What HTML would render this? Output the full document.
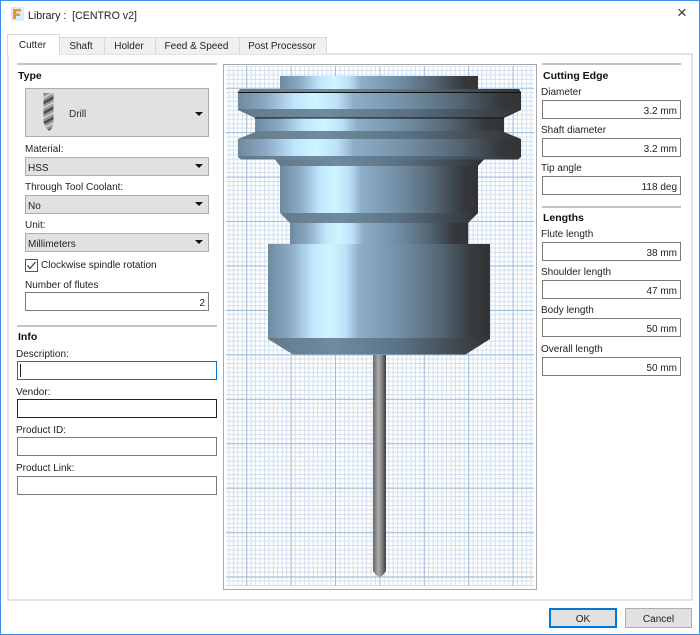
<!DOCTYPE html>
<html><head><meta charset="utf-8"><style>
html,body{margin:0;padding:0;background:#fff}
#w{position:relative;width:700px;height:635px;overflow:hidden;background:#fff;font:10px/14px "Liberation Sans",sans-serif;color:#222;box-sizing:border-box}
#w>*{position:absolute;box-sizing:border-box}
.t{white-space:nowrap;margin-top:1px}
.t.b{font-weight:bold;color:#111;font-size:10.5px;margin-top:0}
.c{background:#e1e1e1;border:1px solid #adadad;padding:4px 0 0 2px;height:19px}
.c:after{content:"";position:absolute;right:5px;top:6px;border:4px solid transparent;border-top:4px solid #111;border-bottom:0}
.d:after{top:23px}
.i{background:#fff;border:1px solid #7a7a7a;height:19px;text-align:right;padding:4px 3px 0 0}
.s{height:2px;background:#c4c4c4}
.tab{background:#f0f0f0;border:1px solid #d9d9d9;border-bottom:0;text-align:center;padding:2px 2px 0 0;top:37px;height:17px}
.btn{background:#e1e1e1;text-align:center;padding-top:3px;top:608px;height:20px}
</style></head><body><div id="w">
<div style="left:0;top:0;width:700px;height:635px;border:1px solid #3a8ee6"></div>
<svg style="left:11px;top:7px" width="13" height="14" viewBox="0 0 13 14"><rect width="13" height="14" fill="#dcedf8"/><path d="M2 2H10V4.5H5V6.5H9V9H5V12H2Z" fill="#e8913a"/></svg>
<div class="t" style="left:28px;top:8px;font-size:10.6px">Library :&nbsp; [CENTRO v2]</div>
<div class="t" style="left:677px;top:6px;font-size:17px;color:#333;margin:0">×</div>

<div style="left:7px;top:53px;width:686px;height:548px;border:2px solid #e2e2e2;background:#fff"></div>
<div class="tab" style="left:59px;width:46px">Shaft</div>
<div class="tab" style="left:104px;width:52px">Holder</div>
<div class="tab" style="left:155px;width:85px">Feed &amp; Speed</div>
<div class="tab" style="left:239px;width:88px">Post Processor</div>
<div class="tab" style="left:7px;top:34px;width:53px;height:21px;background:#fff;padding-top:4px">Cutter</div>

<div class="s" style="left:17px;top:63px;width:200px"></div>
<div class="t b" style="left:18px;top:69px">Type</div>
<div class="c d" style="left:25px;top:88px;width:184px;height:49px"></div>
<svg style="left:42px;top:92px" width="14" height="40" viewBox="0 0 14 40">
<defs><pattern id="tw" width="14" height="9" patternUnits="userSpaceOnUse" patternTransform="rotate(-28)"><rect width="14" height="9" fill="#999"/><rect y="0" width="14" height="2.6" fill="#4a4a4a"/><rect y="5" width="14" height="1.5" fill="#d6d6d6"/></pattern></defs>
<path d="M1.5 1H11.5V30L10 36L7 39L4 36L1.5 30Z" fill="url(#tw)"/></svg>
<div class="t" style="left:69px;top:107px;color:#3a2a2a">Drill</div>
<div class="t" style="left:25px;top:142px">Material:</div>
<div class="c" style="left:25px;top:157px;width:184px">HSS</div>
<div class="t" style="left:25px;top:180px">Through Tool Coolant:</div>
<div class="c" style="left:25px;top:195px;width:184px">No</div>
<div class="t" style="left:25px;top:218px">Unit:</div>
<div class="c" style="left:25px;top:233px;width:184px">Millimeters</div>
<svg style="left:25px;top:259px" width="13" height="13" viewBox="0 0 13 13"><rect x=".5" y=".5" width="12" height="12" fill="#fff" stroke="#555"/><path d="M2.5 6.5L5 9.5L10.5 3" fill="none" stroke="#333" stroke-width="1.2"/></svg>
<div class="t" style="left:41px;top:258px">Clockwise spindle rotation</div>
<div class="t" style="left:25px;top:278px">Number of flutes</div>
<div class="i" style="left:25px;top:292px;width:184px">2</div>

<div class="s" style="left:17px;top:325px;width:200px"></div>
<div class="t b" style="left:18px;top:330px">Info</div>
<div class="t" style="left:16px;top:347px">Description:</div>
<div class="i" style="left:17px;top:361px;width:200px;border-color:#0078d7"></div>
<div style="left:20px;top:364px;width:1px;height:13px;background:#222"></div>
<div class="t" style="left:16px;top:385px">Vendor:</div>
<div class="i" style="left:17px;top:399px;width:200px;border-color:#222"></div>
<div class="t" style="left:16px;top:423px">Product ID:</div>
<div class="i" style="left:17px;top:437px;width:200px"></div>
<div class="t" style="left:16px;top:461px">Product Link:</div>
<div class="i" style="left:17px;top:476px;width:200px"></div>

<svg style="left:0;top:0" width="700" height="635" viewBox="0 0 700 635">
<defs>
<linearGradient id="g"><stop offset="0" stop-color="#6e8a9f"/><stop offset=".1" stop-color="#8caac4"/><stop offset=".2" stop-color="#bfe6fc"/><stop offset=".275" stop-color="#cdf6ff"/><stop offset=".35" stop-color="#bde0f8"/><stop offset=".41" stop-color="#8eaec8"/><stop offset=".59" stop-color="#7390a6"/><stop offset=".77" stop-color="#566876"/><stop offset=".92" stop-color="#363a3e"/><stop offset="1" stop-color="#333"/></linearGradient>
<linearGradient id="d"><stop offset="0" stop-color="#63798a"/><stop offset=".3" stop-color="#6f8b9f"/><stop offset=".6" stop-color="#5a7184"/><stop offset=".85" stop-color="#40494f"/><stop offset="1" stop-color="#333"/></linearGradient>
<linearGradient id="sh"><stop offset="0" stop-color="#666"/><stop offset=".4" stop-color="#aaa"/><stop offset=".65" stop-color="#888"/><stop offset="1" stop-color="#3c3c3c"/></linearGradient>
</defs>
<rect x="223.5" y="64.5" width="313" height="525" fill="#fff" stroke="#a8a8a8"/>
<g fill="none">
<line x1="226" y1="326" x2="534" y2="326" stroke="#d2e0ee" stroke-width="520" stroke-dasharray="1 3.44" stroke-dashoffset="2"/>
<line x1="380" y1="66" x2="380" y2="586" stroke="#d2e0ee" stroke-width="308" stroke-dasharray="1 3.44" stroke-dashoffset=".5"/>
<line x1="226" y1="326" x2="534" y2="326" stroke="#a3bdd6" stroke-width="520" stroke-dasharray="1 43.4" stroke-dashoffset="24.2"/>
<line x1="380" y1="66" x2="380" y2="586" stroke="#a3bdd6" stroke-width="308" stroke-dasharray="1 43.45" stroke-dashoffset="22.75"/>
</g>

<rect x="280" y="76" width="198" height="14" fill="url(#g)"/>
<polygon points="240,89 519,89 521,92 238,92" fill="url(#d)"/>
<polygon points="238,92 521,92 521,109 238,109" fill="url(#g)"/>
<polygon points="238,109 521,109 521,110 504,118 255,118 238,110" fill="url(#d)"/>
<rect x="255" y="118" width="249" height="13" fill="url(#g)"/>
<polygon points="255,131 504,131 504,132 521,139 238,139 255,132" fill="url(#d)"/>
<rect x="238" y="139" width="283" height="17" fill="url(#g)"/>
<polygon points="238,156 521,156 521,157 518,159.5 241,159.5 238,157" fill="url(#d)"/>
<polygon points="275,159.5 484,159.5 478,166 280,166" fill="url(#d)"/>
<rect x="280" y="166" width="198" height="47" fill="url(#g)"/>
<polygon points="280,213 478,213 468,223 290,223" fill="url(#d)"/>
<rect x="290" y="223" width="178" height="21" fill="url(#g)"/>
<rect x="268" y="244" width="222" height="94" fill="url(#g)"/>
<polygon points="268,338 490,338 490,339 465.5,354.5 293,354.5 268,339" fill="url(#d)"/>
<rect x="238" y="92" width="283" height="1" fill="#111"/>
<rect x="255" y="117.5" width="249" height="1" fill="#111"/>
<path d="M373 355H386V571L383 575L380 577H379L376 575L373 571Z" fill="url(#sh)"/>
</svg>

<div class="s" style="left:542px;top:63px;width:139px"></div>
<div class="t b" style="left:543px;top:69px">Cutting Edge</div>
<div class="t" style="left:541px;top:85px">Diameter</div>
<div class="i" style="left:542px;top:100px;width:139px">3.2 mm</div>
<div class="t" style="left:541px;top:123px">Shaft diameter</div>
<div class="i" style="left:542px;top:138px;width:139px">3.2 mm</div>
<div class="t" style="left:541px;top:161px">Tip angle</div>
<div class="i" style="left:542px;top:176px;width:139px">118 deg</div>
<div class="s" style="left:542px;top:206px;width:139px"></div>
<div class="t b" style="left:543px;top:211px">Lengths</div>
<div class="t" style="left:541px;top:227px">Flute length</div>
<div class="i" style="left:542px;top:242px;width:139px">38 mm</div>
<div class="t" style="left:541px;top:265px">Shoulder length</div>
<div class="i" style="left:542px;top:280px;width:139px">47 mm</div>
<div class="t" style="left:541px;top:303px">Body length</div>
<div class="i" style="left:542px;top:318px;width:139px">50 mm</div>
<div class="t" style="left:541px;top:342px">Overall length</div>
<div class="i" style="left:542px;top:357px;width:139px">50 mm</div>

<div class="btn" style="left:549px;width:68px;border:2px solid #0078d7">OK</div>
<div class="btn" style="left:625px;width:67px;border:1px solid #adadad;padding-top:4px">Cancel</div>
</div></body></html>
